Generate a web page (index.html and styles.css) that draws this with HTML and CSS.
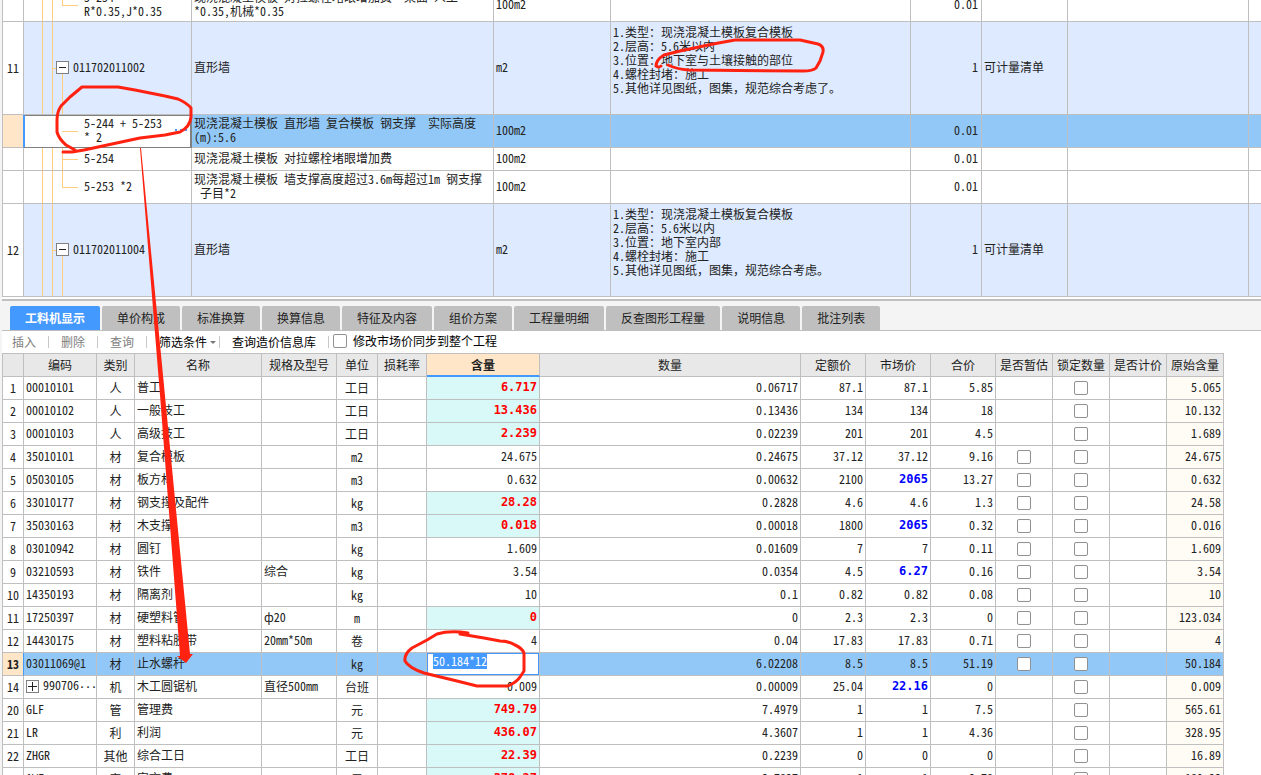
FILE: index.html
```html
<!DOCTYPE html>
<html lang="zh-CN">
<head>
<meta charset="utf-8">
<title>工料机显示</title>
<link rel="stylesheet" href="styles.css">
</head>
<body>
<main class="app">
<section class="bill">
<table class="grid bill-grid">
<colgroup><col class="b-no"><col class="b-code"><col class="b-name"><col class="b-unit"><col class="b-feat"><col class="b-qty"><col class="b-type"><col class="b-note"><col></colgroup>
<tbody>
<tr class="h2"><td><td class="tree leaf last">5-254 *<br>R*0.35,J*0.35<td class="wrap">现浇混凝土模板 对拉螺栓堵眼增加费  梁面 人工<br>*0.35,机械*0.35<td>100m2<td><td class="num">0.01<td><td><td>
<tr class="h6 item"><td class="no">11<td class="tree parent"><div class="node"><button class="toggle" aria-label="折叠"></button>011702011002</div><td>直形墙<td>m2<td class="feat">1.类型：现浇混凝土模板复合模板<br>2.层高：5.6米以内<br>3.位置：地下室与土壤接触的部位<br>4.螺栓封堵：施工<br>5.其他详见图纸，图集，规范综合考虑了。<td class="num">1<td>可计量清单<td><td>
<tr class="h2 current"><td class="no"><td class="tree leaf editing"><div class="node split"><span>5-244 + 5-253<br>* 2</span><button class="more" aria-label="更多"></button></div><td class="wrap">现浇混凝土模板 直形墙 复合模板 钢支撑  实际高度<br>(m):5.6<td>100m2<td><td class="num">0.01<td><td><td>
<tr class="h1"><td><td class="tree leaf">5-254<td class="wrap">现浇混凝土模板 对拉螺栓堵眼增加费<td>100m2<td><td class="num">0.01<td><td><td>
<tr class="h2"><td><td class="tree leaf last">5-253 *2<td class="wrap">现浇混凝土模板 墙支撑高度超过3.6m每超过1m 钢支撑<br> 子目*2<td>100m2<td><td class="num">0.01<td><td><td>
<tr class="h6 item"><td class="no">12<td class="tree parent"><div class="node"><button class="toggle" aria-label="折叠"></button>011702011004</div><td>直形墙<td>m2<td class="feat">1.类型：现浇混凝土模板复合模板<br>2.层高：5.6米以内<br>3.位置：地下室内部<br>4.螺栓封堵：施工<br>5.其他详见图纸，图集，规范综合考虑。<td class="num">1<td>可计量清单<td><td>
</tbody>
</table>
</section>
<nav class="tabs">
<button class="tab active">工料机显示</button><button class="tab">单价构成</button><button class="tab">标准换算</button><button class="tab">换算信息</button><button class="tab">特征及内容</button><button class="tab">组价方案</button><button class="tab">工程量明细</button><button class="tab">反查图形工程量</button><button class="tab">说明信息</button><button class="tab">批注列表</button>
</nav>
<div class="toolbar">
<button class="tool" disabled>插入</button>
<button class="tool" disabled>删除</button>
<button class="tool" disabled>查询</button>
<button class="tool menu">筛选条件</button>
<button class="tool">查询造价信息库</button>
<label class="sync"><input type="checkbox" class="check">修改市场价同步到整个工程</label>
</div>
<section class="detail">
<table class="grid res">
<colgroup><col class="r-no"><col class="r-code"><col class="r-kind"><col class="r-name"><col class="r-spec"><col class="r-unit"><col class="r-loss"><col class="r-cont"><col class="r-qty"><col class="r-price"><col class="r-price"><col class="r-price"><col class="r-flag"><col class="r-flag"><col class="r-flag"><col class="r-flag"></colgroup>
<thead>
<tr><th><th>编码<th>类别<th>名称<th>规格及型号<th>单位<th>损耗率<th class="focus">含量<th>数量<th>定额价<th>市场价<th>合价<th>是否暂估<th>锁定数量<th>是否计价<th>原始含量
</thead>
<tbody>
<tr><td>1<td>00010101<td>人<td>普工<td><td>工日<td><td class="mod">6.717<td>0.06717<td>87.1<td>87.1<td>5.85<td><td><input type="checkbox" class="check" aria-label="锁定数量"><td><td>5.065
<tr><td>2<td>00010102<td>人<td>一般技工<td><td>工日<td><td class="mod">13.436<td>0.13436<td>134<td>134<td>18<td><td><input type="checkbox" class="check" aria-label="锁定数量"><td><td>10.132
<tr><td>3<td>00010103<td>人<td>高级技工<td><td>工日<td><td class="mod">2.239<td>0.02239<td>201<td>201<td>4.5<td><td><input type="checkbox" class="check" aria-label="锁定数量"><td><td>1.689
<tr><td>4<td>35010101<td>材<td>复合模板<td><td>m2<td><td>24.675<td>0.24675<td>37.12<td>37.12<td>9.16<td><input type="checkbox" class="check" aria-label="是否暂估"><td><input type="checkbox" class="check" aria-label="锁定数量"><td><td>24.675
<tr><td>5<td>05030105<td>材<td>板方材<td><td>m3<td><td>0.632<td>0.00632<td>2100<td class="adj">2065<td>13.27<td><input type="checkbox" class="check" aria-label="是否暂估"><td><input type="checkbox" class="check" aria-label="锁定数量"><td><td>0.632
<tr><td>6<td>33010177<td>材<td>钢支撑及配件<td><td>kg<td><td class="mod">28.28<td>0.2828<td>4.6<td>4.6<td>1.3<td><input type="checkbox" class="check" aria-label="是否暂估"><td><input type="checkbox" class="check" aria-label="锁定数量"><td><td>24.58
<tr><td>7<td>35030163<td>材<td>木支撑<td><td>m3<td><td class="mod">0.018<td>0.00018<td>1800<td class="adj">2065<td>0.32<td><input type="checkbox" class="check" aria-label="是否暂估"><td><input type="checkbox" class="check" aria-label="锁定数量"><td><td>0.016
<tr><td>8<td>03010942<td>材<td>圆钉<td><td>kg<td><td>1.609<td>0.01609<td>7<td>7<td>0.11<td><input type="checkbox" class="check" aria-label="是否暂估"><td><input type="checkbox" class="check" aria-label="锁定数量"><td><td>1.609
<tr><td>9<td>03210593<td>材<td>铁件<td>综合<td>kg<td><td>3.54<td>0.0354<td>4.5<td class="adj">6.27<td>0.16<td><input type="checkbox" class="check" aria-label="是否暂估"><td><input type="checkbox" class="check" aria-label="锁定数量"><td><td>3.54
<tr><td>10<td>14350193<td>材<td>隔离剂<td><td>kg<td><td>10<td>0.1<td>0.82<td>0.82<td>0.08<td><input type="checkbox" class="check" aria-label="是否暂估"><td><input type="checkbox" class="check" aria-label="锁定数量"><td><td>10
<tr><td>11<td>17250397<td>材<td>硬塑料管<td>ф20<td>m<td><td class="mod">0<td>0<td>2.3<td>2.3<td>0<td><input type="checkbox" class="check" aria-label="是否暂估"><td><input type="checkbox" class="check" aria-label="锁定数量"><td><td>123.034
<tr><td>12<td>14430175<td>材<td>塑料粘胶带<td>20mm*50m<td>卷<td><td>4<td>0.04<td>17.83<td>17.83<td>0.71<td><input type="checkbox" class="check" aria-label="是否暂估"><td><input type="checkbox" class="check" aria-label="锁定数量"><td><td>4
<tr class="current"><td>13<td>03011069@1<td>材<td>止水螺杆<td><td>kg<td><td class="edit"><input type="text" id="edit" class="edit-box" value="50.184*12" aria-label="含量"><td>6.02208<td>8.5<td>8.5<td>51.19<td><input type="checkbox" class="check" aria-label="是否暂估"><td><input type="checkbox" class="check" aria-label="锁定数量"><td><td>50.184
<tr><td>14<td><div class="node"><button class="toggle plus" aria-label="展开"></button><span>990706<span class="dots">···</span></span></div><td>机<td>木工圆锯机<td>直径500mm<td>台班<td><td>0.009<td>0.00009<td>25.04<td class="adj">22.16<td>0<td><td><input type="checkbox" class="check" aria-label="锁定数量"><td><td>0.009
<tr><td>20<td>GLF<td>管<td>管理费<td><td>元<td><td class="mod">749.79<td>7.4979<td>1<td>1<td>7.5<td><td><input type="checkbox" class="check" aria-label="锁定数量"><td><td>565.61
<tr><td>21<td>LR<td>利<td>利润<td><td>元<td><td class="mod">436.07<td>4.3607<td>1<td>1<td>4.36<td><td><input type="checkbox" class="check" aria-label="锁定数量"><td><td>328.95
<tr><td>22<td>ZHGR<td>其他<td>综合工日<td><td>工日<td><td class="mod">22.39<td>0.2239<td>0<td>0<td>0<td><td><input type="checkbox" class="check" aria-label="锁定数量"><td><td>16.89
<tr><td>23<td>AWF<td>安<td>安文费<td><td>元<td><td class="mod">378.27<td>3.7827<td>1<td>1<td>3.78<td><td><input type="checkbox" class="check" aria-label="锁定数量"><td><td>189.23
</tbody>
</table>
</section>
<svg class="marks" width="1261" height="775" viewBox="0 0 1261 775" aria-hidden="true">
<g class="pen">
<path d="M63 152L72 152L84 150L112 144L140 138L165 135L180 132Q190 127 191 117L191 108Q187 103 178 99L165 96L135 90L118 87L82 87L70 97L61 106Q57 112 57 120L57 132Q59 139 66 145L75 150"/>
<path d="M668 65Q676 69 689 70L803 71Q813 71 816 68L820 61L823 52Q824 46 818 44L800 40L735 40L713 44L680 51L664 55Q656 60 656 66Q659 68 661 66"/>
<path d="M468 633Q450 630 437 634L427 640L412 648Q404 654 405 661Q409 668 424 673L457 681L477 686L508 686Q517 682 520 677L524 671L524 653Q522 648 515 645Q509 641 500 641L484 638L460 634"/>
</g>
<path class="arrow" d="M140 148L141 148L190 654L193 654L186 663L177 656L180 656L160 395Z"/>
</svg>
</main>
<script src="app.js"></script>
</body>
</html>
```
FILE: styles.css
```css
* { box-sizing: border-box; }
body {
  margin: 0;
  height: 100vh;
  overflow: hidden;
  background: #fff;
  color: #222;
  font: 12px/14px "Noto Sans Mono CJK SC", "Noto Sans CJK SC", sans-serif;
}
button, input { font: inherit; color: inherit; margin: 0; }
.app { position: relative; height: 100vh; overflow: hidden; border-left: 2px solid #f4f4f4; }

/* shared grid */
.grid { table-layout: fixed; border-spacing: 0; border-left: 1px solid #bfbfbf; }
.grid td, .grid th {
  padding: 0 2px 2px;
  border-right: 1px solid #bfbfbf;
  border-bottom: 1px solid #bfbfbf;
  overflow: hidden;
  white-space: pre;
  text-align: left;
}
.grid .num { text-align: right; }
.node { display: flex; align-items: center; gap: 4px; }
.split { justify-content: space-between; }
.toggle {
  flex: none;
  width: 13px;
  height: 13px;
  padding: 0;
  border: 1px solid #808080;
  background: linear-gradient(#222, #222) center / 7px 1px no-repeat #fff;
}
.plus {
  background: linear-gradient(#222, #222) center / 9px 1px no-repeat, linear-gradient(#222, #222) center / 1px 9px no-repeat, #fff;
}
.dots { font-family: "Liberation Mono", monospace; font-size: 10px; font-weight: bold; }
.more {
  width: 16px;
  height: 12px;
  padding: 0;
  border: 0;
  background: repeating-linear-gradient(90deg, #4499ff 0 2px, #fff 2px 5px) center / 12px 2px no-repeat;
}

/* bill of quantities */
.bill { overflow: hidden; border-bottom: 2px solid #bfbfbf; padding-bottom: 2px; }
.bill-grid { width: 100%; margin-top: -11px; }
.bill-grid td:last-child { border-right: 0; }
.b-no { width: 21px; }
.b-code { width: 168px; }
.b-name { width: 302px; }
.b-unit { width: 117px; }
.b-feat { width: 300px; }
.b-qty { width: 71px; }
.b-type { width: 86px; }
.b-note { width: 181px; }
.h1 { height: 23px; }
.h2 { height: 33px; }
.h6 { height: 93px; }
.item td { background-color: #deeaff; }
.grid .no { text-align: center; background-color: #fff; padding: 0; }
.current td { background-color: #92c8f7; }
.current .no { background-color: #ffe6c8; border-right-color: #4499ff; }
.bill-grid .feat { vertical-align: top; padding-top: 3px; }
.bill-grid .num { padding-right: 3px; }
.tree {
  --line: linear-gradient(#ffcc80, #ffcc80);
  background-image: var(--line), var(--line), var(--line), var(--line);
  background-repeat: no-repeat;
}
.bill-grid .leaf {
  padding-left: 60px;
  background-size: 1px 100%, 1px 100%, 1px 100%, 16px 1px;
  background-position: 18px 0, 28px 0, 38px 0, 38px 50%;
}
.bill-grid .last { background-size: 1px 100%, 1px 100%, 1px 50%, 16px 1px; }
.bill-grid .parent {
  padding-left: 32px;
  background-size: 1px 100%, 1px 100%, 1px 50%, 5px 1px;
  background-position: 18px 0, 28px 0, 38px 100%, 28px 50%;
}
.bill-grid .editing {
  background-color: #fff;
  background-size: 0 0, 0 0, 0 0, 16px 1px;
  box-shadow: inset 1px 0 #4499ff, inset 0 1px #808080, inset -1px 0 #808080;
  border-color: #808080;
}

/* tabs */
.tabs {
  display: flex;
  gap: 2px;
  padding: 5px 8px 0;
  background: #f4f4f4;
  border-bottom: 1px solid #bfbfbf;
}
.tab {
  height: 24px;
  padding: 0 15px;
  border: 0;
  border-radius: 2px 2px 0 0;
  background: #bfbfbf;
  white-space: nowrap;
}
.tab.active { background: #4499ff; color: #fff; font-weight: bold; }

/* toolbar */
.toolbar { display: flex; align-items: center; height: 22px; }
.tool {
  padding: 0 12px;
  border: 0;
  border-right: 1px solid #c8c8c8;
  background: none;
  line-height: 12px;
  color: #000;
  white-space: nowrap;
}
.tool:first-child { padding-left: 10px; }
.tool:disabled { color: #808080; }
.menu { display: flex; align-items: center; gap: 3px; padding-right: 3px; }
.menu::after { content: ""; border: 3px solid transparent; border-top-color: #777; border-bottom: 0; }
.sync { display: flex; align-items: center; gap: 6px; padding: 0 4px 2px; color: #000; }
.check {
  appearance: none;
  display: block;
  width: 14px;
  height: 14px;
  border: 1px solid #919191;
  border-radius: 2px;
  background: #fff;
}

/* resources */
.res { width: 1222px; border-top: 1px solid #bfbfbf; }
.r-no { width: 21px; }
.r-code { width: 73px; }
.r-kind { width: 38px; }
.r-name { width: 127px; }
.r-spec { width: 75px; }
.r-unit { width: 41px; }
.r-loss { width: 49px; }
.r-cont { width: 113px; }
.r-qty { width: 261px; }
.r-price { width: 65px; }
.r-flag { width: 57px; }
.res tr { height: 23px; }
.res th { background: #e8e8e8; text-align: center; font-weight: normal; padding: 0; }
.res .focus { background: #ffe6c8; border-bottom: 2px solid #4499ff; font-weight: bold; }
.res td:nth-child(1), .res td:nth-child(3), .res td:nth-child(6) { text-align: center; padding: 0; }
.res td:nth-child(n+8) { text-align: right; }
.res td:nth-child(16) { background: #fffbf5; }
.res td .check { margin: 1px auto 0; }
.res .mod, .res .adj { font-family: "DejaVu Sans Mono", monospace; font-weight: bold; }
.res .mod { background: #d9f8f8; color: #f00; }
.res .adj { color: #00f; }
.res .current td { background: #92c8f7; }
.res .current td:first-child { background: #ffe6c8; border-right-color: #4499ff; font-weight: bold; }
.res .current .edit { padding: 0; background: #fff; }
.edit-box {
  display: block;
  width: 100%;
  height: 22px;
  padding: 0 5px 8px;
  border: 1px solid #4499ff;
  outline: 0;
  background: #fff;
}
.edit-box::selection { background: #4499ff; color: #fff; }

/* pen marks lie over both grids */
.marks { position: absolute; top: 0; left: -2px; pointer-events: none; }
.pen { fill: none; stroke: #ff2211; stroke-width: 3; stroke-linejoin: round; stroke-linecap: round; }
.arrow { fill: #ff2211; }
```
FILE: app.js
```js
const edit = document.getElementById("edit");
edit.focus({ preventScroll: true });
edit.select();
```
